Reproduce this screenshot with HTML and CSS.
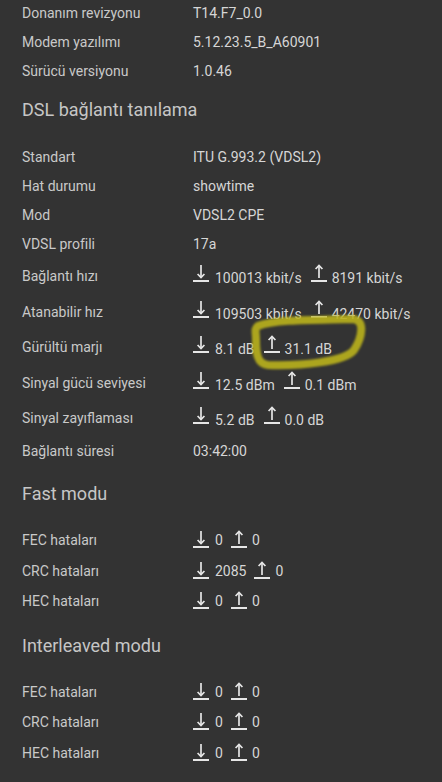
FILE: index.html
```html
<!DOCTYPE html>
<html lang="tr">
<head>
    <meta charset="UTF-8">
    <title>DSL durumu</title>
    <link rel="stylesheet" href="styles.css">
</head>
<body>

<svg class="defs" width="0" height="0">
    <symbol id="dn" viewBox="0 0 16 18">
        <line x1="8" y1="1" x2="8" y2="13.5" stroke="currentColor" stroke-width="1.7"/>
        <polyline points="4.6,10 8,13.6 11.4,10" fill="none" stroke="currentColor" stroke-width="1.7"/>
        <rect x="0" y="16" width="16" height="2" fill="currentColor"/>
    </symbol>
    <symbol id="up" viewBox="0 0 16 18">
        <line x1="8" y1="1.5" x2="8" y2="14" stroke="currentColor" stroke-width="1.7"/>
        <polyline points="4.6,5 8,1.4 11.4,5" fill="none" stroke="currentColor" stroke-width="1.7"/>
        <rect x="0" y="16" width="16" height="2" fill="currentColor"/>
    </symbol>
</svg>

<div class="page">
    <div class="group group-top">
        <div class="row"><span class="label">Donanım revizyonu</span><span class="value">T14.F7_0.0</span></div>
        <div class="row"><span class="label">Modem yazılımı</span><span class="value">5.12.23.5_B_A60901</span></div>
        <div class="row"><span class="label">Sürücü versiyonu</span><span class="value">1.0.46</span></div>
    </div>

    <h2 class="title title-first">DSL bağlantı tanılama</h2>
    <div class="group">
        <div class="row"><span class="label">Standart</span><span class="value">ITU G.993.2 (VDSL2)</span></div>
        <div class="row"><span class="label">Hat durumu</span><span class="value">showtime</span></div>
        <div class="row"><span class="label">Mod</span><span class="value">VDSL2 CPE</span></div>
        <div class="row"><span class="label">VDSL profili</span><span class="value">17a</span></div>
        <div class="row row-io">
            <span class="label">Bağlantı hızı</span>
            <span class="value"><span class="pair"><svg class="ico"><use href="#dn"/></svg>100013 kbit/s</span><span class="pair"><svg class="ico"><use href="#up"/></svg>8191 kbit/s</span></span>
        </div>
        <div class="row row-io">
            <span class="label">Atanabilir hız</span>
            <span class="value"><span class="pair"><svg class="ico"><use href="#dn"/></svg>109503 kbit/s</span><span class="pair"><svg class="ico"><use href="#up"/></svg>42470 kbit/s</span></span>
        </div>
        <div class="row row-io">
            <span class="label">Gürültü marjı</span>
            <span class="value"><span class="pair"><svg class="ico"><use href="#dn"/></svg>8.1 dB</span><span class="pair"><svg class="ico"><use href="#up"/></svg>31.1 dB</span></span>
        </div>
        <div class="row row-io">
            <span class="label">Sinyal gücü seviyesi</span>
            <span class="value"><span class="pair"><svg class="ico"><use href="#dn"/></svg>12.5 dBm</span><span class="pair"><svg class="ico"><use href="#up"/></svg>0.1 dBm</span></span>
        </div>
        <div class="row row-io">
            <span class="label">Sinyal zayıflaması</span>
            <span class="value"><span class="pair"><svg class="ico"><use href="#dn"/></svg>5.2 dB</span><span class="pair"><svg class="ico"><use href="#up"/></svg>0.0 dB</span></span>
        </div>
        <div class="row"><span class="label">Bağlantı süresi</span><span class="value">03:42:00</span></div>
    </div>

    <h2 class="title">Fast modu</h2>
    <div class="group group-err">
        <div class="row">
            <span class="label">FEC hataları</span>
            <span class="value"><span class="pair"><svg class="ico"><use href="#dn"/></svg>0</span><span class="pair"><svg class="ico"><use href="#up"/></svg>0</span></span>
        </div>
        <div class="row">
            <span class="label">CRC hataları</span>
            <span class="value"><span class="pair"><svg class="ico"><use href="#dn"/></svg>2085</span><span class="pair"><svg class="ico"><use href="#up"/></svg>0</span></span>
        </div>
        <div class="row">
            <span class="label">HEC hataları</span>
            <span class="value"><span class="pair"><svg class="ico"><use href="#dn"/></svg>0</span><span class="pair"><svg class="ico"><use href="#up"/></svg>0</span></span>
        </div>
    </div>

    <h2 class="title">Interleaved modu</h2>
    <div class="group group-err">
        <div class="row">
            <span class="label">FEC hataları</span>
            <span class="value"><span class="pair"><svg class="ico"><use href="#dn"/></svg>0</span><span class="pair"><svg class="ico"><use href="#up"/></svg>0</span></span>
        </div>
        <div class="row">
            <span class="label">CRC hataları</span>
            <span class="value"><span class="pair"><svg class="ico"><use href="#dn"/></svg>0</span><span class="pair"><svg class="ico"><use href="#up"/></svg>0</span></span>
        </div>
        <div class="row">
            <span class="label">HEC hataları</span>
            <span class="value"><span class="pair"><svg class="ico"><use href="#dn"/></svg>0</span><span class="pair"><svg class="ico"><use href="#up"/></svg>0</span></span>
        </div>
    </div>

    <!-- el ile çizilmiş işaret -->
    <svg class="marker" viewBox="0 0 442 782">
        <path d="M258 328 C275 321 320 322 352 321 C366 321 362 340 354 352 C345 364 300 368 268 367 C257 366 256 355 256 342 C256 334 254 331 258 328 Z"/>
    </svg>
</div>

</body>
</html>
```

FILE: styles.css
```css
body {
    margin: 0;
    background: #333333;
    font-family: Roboto, "Noto Sans", sans-serif;
    font-size: 14px;
    color: #cdcdcd;
    overflow: hidden;
}
.defs {
    position: absolute;
}
.page {
    position: relative;
    padding-left: 22px;
    height: 782px;
}
.group-top {
    margin-top: -2px;
}
.row {
    display: grid;
    grid-template-columns: 171px 1fr;
    align-items: center;
    height: 29px;
    line-height: 20px;
}
.row-io {
    height: 35.5px;
}
.group-err .row {
    height: 30.5px;
}
.label {
    color: #c9c9c9;
}
.value {
    color: #d6d6d6;
    white-space: nowrap;
}
.pair {
    margin-right: 9px;
}
.group-err .pair {
    margin-right: 8px;
}
.ico {
    width: 16px;
    height: 18px;
    margin-right: 6px;
    color: #e6e6e6;
    vertical-align: 1px;
}
.pair + .pair .ico {
    margin-right: 5px;
}
.group-err .ico {
    vertical-align: -3px;
}
.title {
    margin: 17px 0 19px;
    font-size: 18px;
    font-weight: 400;
    line-height: 24px;
    color: #c6c6c6;
}
.title-first {
    margin: 13px 0 20.5px;
}
.marker {
    position: absolute;
    left: 0;
    top: 0;
    width: 442px;
    height: 782px;
    pointer-events: none;
}
.marker path {
    fill: none;
    stroke: #bab21c;
    stroke-width: 8;
    opacity: 0.9;
    filter: blur(1.2px);
}
```
